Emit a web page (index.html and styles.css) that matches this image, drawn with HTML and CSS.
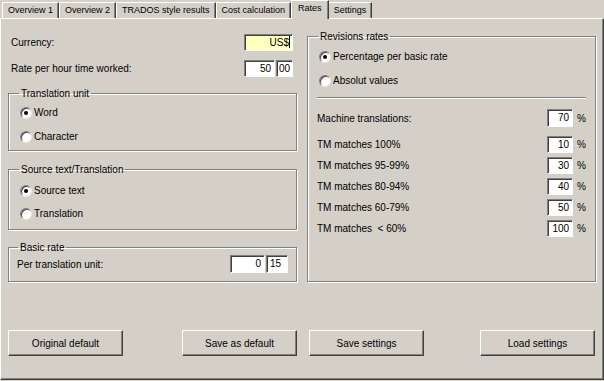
FILE: index.html
```html
<!DOCTYPE html>
<html lang="en">

<head>
    <meta charset="UTF-8">
    <title>Rates</title>
    <link rel="stylesheet" href="styles.css">
</head>

<body>
    <div class="window">
        <ul class="tabs">
            <li>Overview 1</li>
            <li>Overview 2</li>
            <li>TRADOS style results</li>
            <li>Cost calculation</li>
            <li class="active">Rates</li>
            <li>Settings</li>
        </ul>

        <div class="panel">
            <div class="columns">
                <div class="left">
                    <div class="row currency">
                        <span>Currency:</span>
                        <div class="edit yellow">US$<i class="caret"></i></div>
                    </div>
                    <div class="row hour">
                        <span>Rate per hour time worked:</span>
                        <div class="pair">
                            <div class="edit w31">50</div>
                            <div class="edit w17">00</div>
                        </div>
                    </div>

                    <fieldset class="group unit">
                        <legend>Translation unit</legend>
                        <label class="radio"><b class="dot on"></b>Word</label>
                        <label class="radio"><b class="dot"></b>Character</label>
                    </fieldset>

                    <fieldset class="group source">
                        <legend>Source text/Translation</legend>
                        <label class="radio"><b class="dot on"></b>Source text</label>
                        <label class="radio"><b class="dot"></b>Translation</label>
                    </fieldset>

                    <fieldset class="group basic">
                        <legend>Basic rate</legend>
                        <div class="row">
                            <span>Per translation unit:</span>
                            <div class="pair">
                                <div class="edit w35">0</div>
                                <div class="edit w22 lefttext">15</div>
                            </div>
                        </div>
                    </fieldset>
                </div>

                <div class="right">
                    <fieldset class="group revisions">
                        <legend>Revisions rates</legend>
                        <label class="radio"><b class="dot on"></b>Percentage per basic rate</label>
                        <label class="radio"><b class="dot"></b>Absolut values</label>
                        <div class="sep"></div>

                        <div class="row pct machine">
                            <span>Machine translations:</span>
                            <div class="cell"><div class="edit w25">70</div><span>%</span></div>
                        </div>
                        <div class="tm">
                            <div class="row pct">
                                <span>TM matches 100%</span>
                                <div class="cell"><div class="edit w25">10</div><span>%</span></div>
                            </div>
                            <div class="row pct">
                                <span>TM matches 95-99%</span>
                                <div class="cell"><div class="edit w25">30</div><span>%</span></div>
                            </div>
                            <div class="row pct">
                                <span>TM matches 80-94%</span>
                                <div class="cell"><div class="edit w25">40</div><span>%</span></div>
                            </div>
                            <div class="row pct">
                                <span>TM matches 60-79%</span>
                                <div class="cell"><div class="edit w25">50</div><span>%</span></div>
                            </div>
                            <div class="row pct">
                                <span>TM matches &nbsp;&lt; 60%</span>
                                <div class="cell"><div class="edit w25">100</div><span>%</span></div>
                            </div>
                        </div>
                    </fieldset>
                </div>
            </div>

            <div class="buttons">
                <div class="half">
                    <button>Original default</button>
                    <button>Save as default</button>
                </div>
                <div class="half">
                    <button>Save settings</button>
                    <button>Load settings</button>
                </div>
            </div>
        </div>
    </div>
</body>

</html>
```

FILE: styles.css
```css
* {
    padding: 0;
    margin: 0;
    box-sizing: border-box;
}

body {
    background: #d4d0c8;
    font-family: "Liberation Sans", Arial, sans-serif;
    font-size: 10px;
    color: #000;
}

.window {
    width: 604px;
    height: 381px;
}

/* tabs */
.tabs {
    list-style: none;
    display: flex;
    height: 18px;
    padding-left: 2px;
    align-items: flex-end;
}

.tabs li {
    height: 16px;
    line-height: 15px;
    padding: 0 5px 0 5px;
    border-top: 1px solid #fff;
    border-left: 1px solid #fff;
    border-right: 1px solid #404040;
    box-shadow: inset -1px 0 0 #808080;
    font-size: 9px;
    white-space: nowrap;
}

.tabs li.active {
    height: 19px;
    margin: 0 -2px -1px 0;
    padding: 0 6px 0 6px;
    line-height: 15px;
    background: #d4d0c8;
    position: relative;
    z-index: 1;
}

.tabs li.active + li {
    margin-left: 1px;
}

/* panel */
.panel {
    height: 362px;
    border-top: 1px solid #fff;
    border-left: 1px solid #fff;
    border-right: 1px solid #404040;
    border-bottom: 1px solid #404040;
    box-shadow: inset -1px -1px 0 #808080;
    padding: 15px 0 0 7px;
}

.columns {
    display: grid;
    grid-template-columns: 289px 289px;
    column-gap: 10px;
}

.row {
    display: flex;
    justify-content: space-between;
    align-items: center;
}

.left > .row {
    padding: 0 4px 0 3px;
}

.hour {
    margin-top: 9px;
}

.pair {
    display: flex;
    gap: 1px;
}

/* edit boxes */
.edit {
    height: 17px;
    line-height: 15px;
    background: #fff;
    border-top: 1px solid #808080;
    border-left: 1px solid #808080;
    border-right: 1px solid #fff;
    border-bottom: 1px solid #fff;
    box-shadow: inset 1px 1px 0 #404040;
    text-align: right;
    padding: 0 3px;
}

.yellow {
    width: 49px;
    background: #ffffc0;
    padding-right: 2px;
}

.caret {
    display: inline-block;
    width: 1px;
    height: 12px;
    background: #000;
    vertical-align: -2px;
}

.w17 { width: 17px; padding: 0 2px; }
.w22 { width: 22px; }
.w25 { width: 26px; }
.w31 { width: 31px; }
.w35 { width: 35px; }

.lefttext {
    text-align: left;
    padding-left: 3px;
}

/* group boxes */
.group {
    border: 1px solid #808080;
    box-shadow: 1px 1px 0 #fff, inset 1px 1px 0 #fff;
    padding: 0 9px 0 10px;
}

.group legend {
    padding: 0 2px;
    line-height: 13px;
}

.unit {
    margin-top: 10px;
    height: 64px;
    padding-top: 6px;
}

.source {
    margin-top: 12px;
    height: 67px;
    padding-top: 8px;
}

.basic {
    margin-top: 11px;
    height: 41px;
    padding: 1px 8px 0 8px;
}

.basic legend {
    margin-left: 1px;
}

.basic .edit {
    height: 18px;
}

.radio {
    display: flex;
    align-items: center;
    height: 13px;
    gap: 2px;
}

.radio + .radio {
    margin-top: 11px;
}

.source .radio + .radio {
    margin-top: 10px;
}

.dot {
    width: 12px;
    height: 12px;
    border-radius: 50%;
    background: #fff;
    border: 1px solid;
    border-color: #808080 #e8e6e1 #e8e6e1 #808080;
    box-shadow: inset 1px 1px 0 #404040;
    display: flex;
    align-items: center;
    justify-content: center;
    margin-left: 1px;
}

.dot.on::after {
    content: "";
    width: 4px;
    height: 4px;
    border-radius: 50%;
    background: #000;
}

.revisions {
    margin-top: -4px;
    height: 252px;
    padding: 7px 9px 0 10px;
}

.revisions .radio + .radio {
    margin-top: 11px;
}

.sep {
    height: 2px;
    border-top: 1px solid #808080;
    border-bottom: 1px solid #fff;
    margin: 10px 0 0 -1px;
}

.machine {
    margin-top: 10px;
    margin-left: -1px;
}

.machine .edit {
    height: 18px;
}

.tm {
    margin-top: 9px;
    margin-left: -1px;
    display: flex;
    flex-direction: column;
    gap: 4px;
}

.cell {
    display: flex;
    align-items: center;
    gap: 4px;
}

/* buttons */
.buttons {
    display: grid;
    grid-template-columns: 289px 289px;
    column-gap: 10px;
    margin-top: 48px;
}

.half {
    display: flex;
    justify-content: space-between;
}

.half:last-child {
    padding: 0 1px 0 2px;
}

button {
    width: 115px;
    height: 26px;
    font-family: inherit;
    font-size: 10px;
    background: #d4d0c8;
    border-top: 1px solid #fff;
    border-left: 1px solid #fff;
    border-right: 1px solid #404040;
    border-bottom: 1px solid #404040;
    box-shadow: inset -1px -1px 0 #808080;
    color: #000;
}
```
